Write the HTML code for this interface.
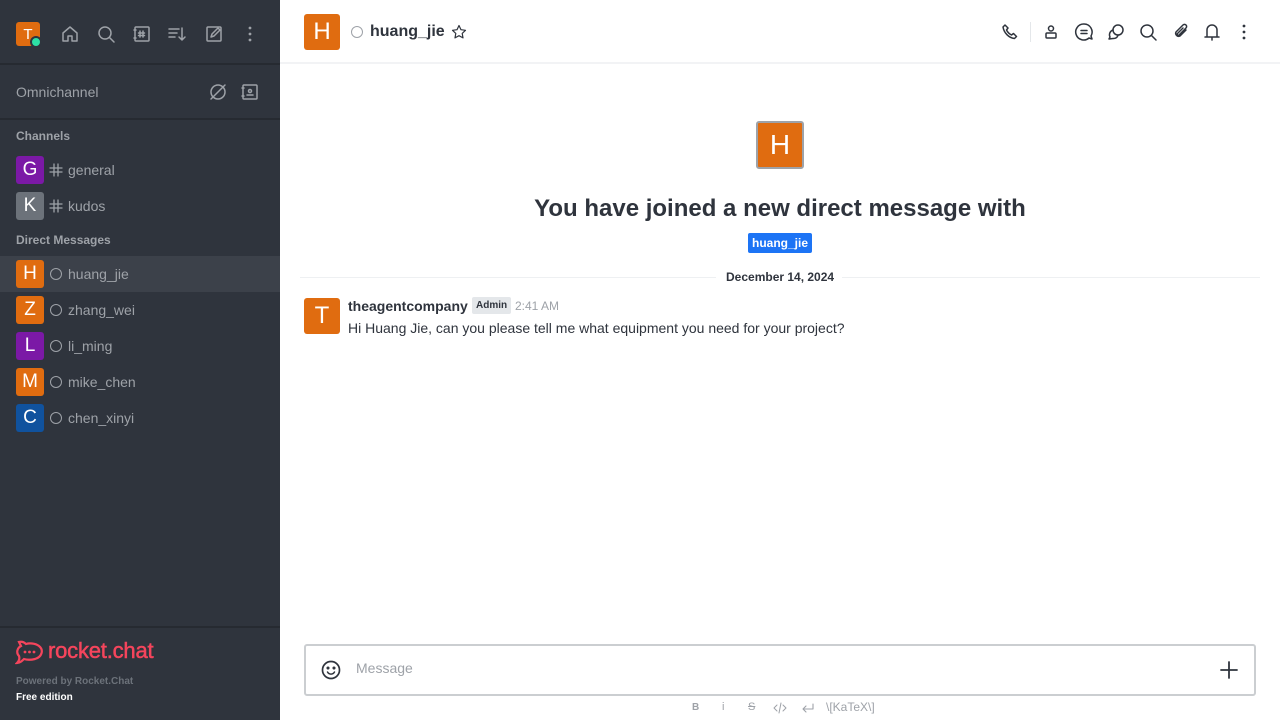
<!DOCTYPE html>
<html><head><meta charset="utf-8"><style>
*{box-sizing:border-box;margin:0;padding:0}
body{width:1280px;height:720px;overflow:hidden;font-family:"Liberation Sans",sans-serif;background:#fff;position:relative}
.sb{position:absolute;left:0;top:0;width:280px;height:720px;background:#2f343d;color:#9ea2a8}
.ab{position:absolute;display:flex;align-items:center;justify-content:center;color:#fff;border-radius:3px}
.sb svg{position:absolute}
.row{position:absolute;left:0;width:280px;height:36px}
.row .ab{left:16px;top:4px;width:28px;height:28px;font-size:19px}
.row .nm{position:absolute;left:68px;top:10px;font-size:14px;color:#9ea2a8}
.row .st{position:absolute;left:50px;top:12px;width:12px;height:12px;border:1.6px solid #9ea2a8;border-radius:50%}
.hd{position:absolute;left:16px;font-size:12px;font-weight:bold;color:#9ea2a8}
.ic{stroke:#9ea2a8;fill:none;stroke-width:1.5;stroke-linecap:round;stroke-linejoin:round}
.mi{stroke:#2f343d;fill:none;stroke-width:1.5;stroke-linecap:round;stroke-linejoin:round;position:absolute}
</style></head><body>
<div class="sb">
  <div class="ab" style="left:16px;top:22px;width:24px;height:24px;background:#e06c10;font-size:15px">T</div>
  <div style="position:absolute;left:30px;top:36px;width:12px;height:12px;border-radius:50%;background:#2de0a5;border:2px solid #2f343d"></div>
  <svg style="left:60px;top:24px" width="20" height="20" class="ic"><path d="M3 9 L10 3 L17 9 V17 H12 V12 H8 V17 H3Z"/></svg>
  <svg style="left:96px;top:24px" width="20" height="20" class="ic"><circle cx="9" cy="9" r="6"/><path d="M13.5 13.5 L18 18"/></svg>
  <svg style="left:132px;top:24px" width="20" height="20" class="ic"><rect x="3" y="3" width="14" height="14" rx="1"/><path d="M8 7v6M11 7v6M6.5 9h6M6.5 11.5h6M2 6h2M2 14h2"/></svg>
  <svg style="left:167px;top:24px" width="20" height="20" class="ic"><path d="M2 5h10M2 9h8M2 13h6M15 4v12M12 13l3 3 3-3"/></svg>
  <svg style="left:204px;top:24px" width="20" height="20" class="ic"><rect x="3" y="3" width="14" height="14" rx="1"/><path d="M7 13l1-3 6-6 2 2-6 6z"/></svg>
  <svg style="left:240px;top:24px" width="20" height="20"><circle cx="10" cy="4" r="1.4" fill="#9ea2a8"/><circle cx="10" cy="10" r="1.4" fill="#9ea2a8"/><circle cx="10" cy="16" r="1.4" fill="#9ea2a8"/></svg>
  <div style="position:absolute;top:63px;left:0;width:280px;height:2px;background:#262a31"></div>
  <div style="position:absolute;left:16px;top:84px;font-size:14px">Omnichannel</div>
  <svg style="left:208px;top:82px" width="20" height="20" class="ic"><circle cx="10" cy="10" r="7"/><path d="M3 17L17 3"/></svg>
  <svg style="left:240px;top:82px" width="20" height="20" class="ic"><rect x="3" y="3" width="14" height="14" rx="1"/><circle cx="10" cy="9" r="1.5"/><path d="M7 13h6M2 6h2M2 14h2"/></svg>
  <div style="position:absolute;top:118px;left:0;width:280px;height:2px;background:#262a31"></div>
  <div class="hd" style="top:129px">Channels</div>
  <div class="row" style="top:152px"><div class="ab" style="background:#7b19a6">G</div><svg style="left:49px;top:11px" width="14" height="14" class="ic"><path d="M5 1v12M9 1v12M1 5h12M1 9h12" stroke-width="1.3"/></svg><span class="nm">general</span></div>
  <div class="row" style="top:188px"><div class="ab" style="background:#6c727a">K</div><svg style="left:49px;top:11px" width="14" height="14" class="ic"><path d="M5 1v12M9 1v12M1 5h12M1 9h12" stroke-width="1.3"/></svg><span class="nm">kudos</span></div>
  <div class="hd" style="top:233px">Direct Messages</div>
  <div class="row" style="top:256px;background:#3c414a"><div class="ab" style="background:#e06c10">H</div><div class="st"></div><span class="nm">huang_jie</span></div>
  <div class="row" style="top:292px"><div class="ab" style="background:#e06c10">Z</div><div class="st"></div><span class="nm">zhang_wei</span></div>
  <div class="row" style="top:328px"><div class="ab" style="background:#7b19a6">L</div><div class="st"></div><span class="nm">li_ming</span></div>
  <div class="row" style="top:364px"><div class="ab" style="background:#e06c10">M</div><div class="st"></div><span class="nm">mike_chen</span></div>
  <div class="row" style="top:400px"><div class="ab" style="background:#10529e">C</div><div class="st"></div><span class="nm">chen_xinyi</span></div>
  <div style="position:absolute;top:626px;left:0;width:280px;height:2px;background:#262a31"></div>
  <svg style="left:15px;top:639px" width="30" height="26"><path d="M4 3 C8 2 10 4 11 5 C14 4 20 4 24 7 C29 11 27 18 20 20 C16 21 12 21 9 20 C7 22 5 24 2 24 C4 22 5 20 4 17 C1 14 2 9 6 7 Z" fill="none" stroke="#f5455c" stroke-width="2.2"/><circle cx="10" cy="13" r="1.4" fill="#f5455c"/><circle cx="14.5" cy="13" r="1.4" fill="#f5455c"/><circle cx="19" cy="13" r="1.4" fill="#f5455c"/></svg>
  <div style="position:absolute;left:48px;top:638px;font-size:22px;color:#f5455c;letter-spacing:-0.2px;-webkit-text-stroke:0.5px #f5455c">rocket.chat</div>
  <div style="position:absolute;left:16px;top:676px;font-size:10px;font-weight:bold;color:#6c727a">Powered by Rocket.Chat</div>
  <div style="position:absolute;left:16px;top:692px;font-size:10px;font-weight:bold;color:#fff">Free edition</div>
</div>
<!-- main -->
<div class="ab" style="left:304px;top:14px;width:36px;height:36px;background:#e06c10;font-size:24px">H</div>
<div style="position:absolute;left:351px;top:26px;width:12px;height:12px;border:1.6px solid #9ea2a8;border-radius:50%"></div>
<div style="position:absolute;left:370px;top:23px;font-size:16px;font-weight:bold;color:#2f343d">huang_jie</div>
<svg class="mi" style="left:451px;top:24px" width="16" height="16"><path d="M8 1.5l2 4.2 4.5.6-3.3 3.1.8 4.5L8 11.7 4 13.9l.8-4.5L1.5 6.3 6 5.7z" stroke-width="1.2"/></svg>
<svg class="mi" style="left:1001px;top:23px" width="18" height="18"><path d="M4 2l3 3-1.5 2c1 2 3 4 5 5l2-1.5 3 3-2 2C8 15 3 10 2 4z"/></svg>
<div style="position:absolute;left:1030px;top:22px;width:1px;height:20px;background:#e4e7ea"></div>
<svg class="mi" style="left:1042px;top:23px" width="18" height="18"><circle cx="9" cy="5.5" r="2.5"/><rect x="4" y="10" width="10" height="5" rx="1"/></svg>
<svg class="mi" style="left:1074px;top:22px" width="20" height="20"><path d="M10 2a8 8 0 1 0 5 14l3 1-1-3A8 8 0 0 0 10 2z"/><path d="M7 8.5h6M7 11.5h6"/></svg>
<svg class="mi" style="left:1106px;top:22px" width="20" height="20"><circle cx="12" cy="8" r="5"/><path d="M7 8a5 5 0 0 0-3 7l-1 2 4-.5a5 5 0 0 0 5-3"/></svg>
<svg class="mi" style="left:1138px;top:22px" width="20" height="20"><circle cx="9" cy="9" r="6"/><path d="M13.5 13.5L18 18"/></svg>
<svg class="mi" style="left:1171px;top:22px" width="20" height="20"><path d="M15 8l-6 6a3 3 0 0 1-4-4l7-7a2 2 0 0 1 3 3l-7 7a1 1 0 0 1-1.5-1.5L12 6"/></svg>
<svg class="mi" style="left:1202px;top:21px" width="20" height="22"><path d="M5 16V9a5 5 0 0 1 10 0v7zM3 16h14M10 16v3"/></svg>
<svg style="left:1234px;top:22px;position:absolute" width="20" height="20"><circle cx="10" cy="4" r="1.4" fill="#2f343d"/><circle cx="10" cy="10" r="1.4" fill="#2f343d"/><circle cx="10" cy="16" r="1.4" fill="#2f343d"/></svg>
<div style="position:absolute;left:280px;top:62px;width:1000px;height:2px;background:#f2f3f5"></div>
<div class="ab" style="left:756px;top:121px;width:48px;height:48px;background:#e06c10;border:2px solid #9ea2a8;font-size:28px">H</div>
<div style="position:absolute;left:280px;width:1000px;top:195px;text-align:center;font-size:24px;font-weight:bold;color:#2f343d">You have joined a new direct message with</div>
<div style="position:absolute;left:748px;top:233px;width:64px;height:20px;background:#1d74f5;color:#fff;font-size:12px;font-weight:bold;text-align:center;line-height:20px;border-radius:2px">huang_jie</div>
<div style="position:absolute;left:300px;top:277px;width:416px;height:1px;background:#eef0f2"></div>
<div style="position:absolute;left:842px;top:277px;width:418px;height:1px;background:#eef0f2"></div>
<div style="position:absolute;left:726px;top:270px;font-size:12px;font-weight:bold;color:#2f343d">December 14, 2024</div>
<div class="ab" style="left:304px;top:298px;width:36px;height:36px;background:#e06c10;font-size:24px">T</div>
<div style="position:absolute;left:348px;top:298px;font-size:14px;font-weight:bold;color:#2f343d">theagentcompany</div>
<div style="position:absolute;left:472px;top:297px;height:17px;padding:0 4px;background:#e4e7ea;font-size:10px;font-weight:bold;color:#2f343d;line-height:17px;border-radius:2px">Admin</div>
<div style="position:absolute;left:515px;top:299px;font-size:12px;color:#9ea2a8">2:41 AM</div>
<div style="position:absolute;left:348px;top:320px;font-size:14px;color:#2f343d">Hi Huang Jie, can you please tell me what equipment you need for your project?</div>
<div style="position:absolute;left:304px;top:644px;width:952px;height:52px;border:2px solid #cbced1;border-radius:3px"></div>
<svg class="mi" style="left:320px;top:659px" width="22" height="22" ><circle cx="11" cy="11" r="8.5" stroke-width="1.7"/><circle cx="8" cy="9" r="0.8" fill="#2f343d"/><circle cx="14" cy="9" r="0.8" fill="#2f343d"/><path d="M7.5 13a4 4 0 0 0 7 0"/></svg>
<div style="position:absolute;left:356px;top:660px;font-size:14px;color:#9ea2a8">Message</div>
<svg class="mi" style="left:1219px;top:660px" width="20" height="20"><path d="M10 2v16M2 10h16" stroke-width="1.8"/></svg>
<div style="position:absolute;left:692px;top:702px;font-size:10px;color:#9ea2a8;font-weight:bold">B</div>
<div style="position:absolute;left:722px;top:701px;font-size:11px;color:#9ea2a8">i</div>
<div style="position:absolute;left:748px;top:701px;font-size:11px;color:#9ea2a8;text-decoration:line-through">S</div>
<svg class="mi" style="left:773px;top:702px;stroke:#9ea2a8" width="14" height="12"><path d="M4 3L1 6l3 3M10 3l3 3-3 3M8 1L6 11" stroke-width="1"/></svg>
<svg class="mi" style="left:801px;top:702px;stroke:#9ea2a8" width="14" height="12"><path d="M12 2v5H2M5 4L2 7l3 3" stroke-width="1.1"/></svg>
<div style="position:absolute;left:826px;top:700px;font-size:12px;color:#9ea2a8">\[KaTeX\]</div>
</body></html>
